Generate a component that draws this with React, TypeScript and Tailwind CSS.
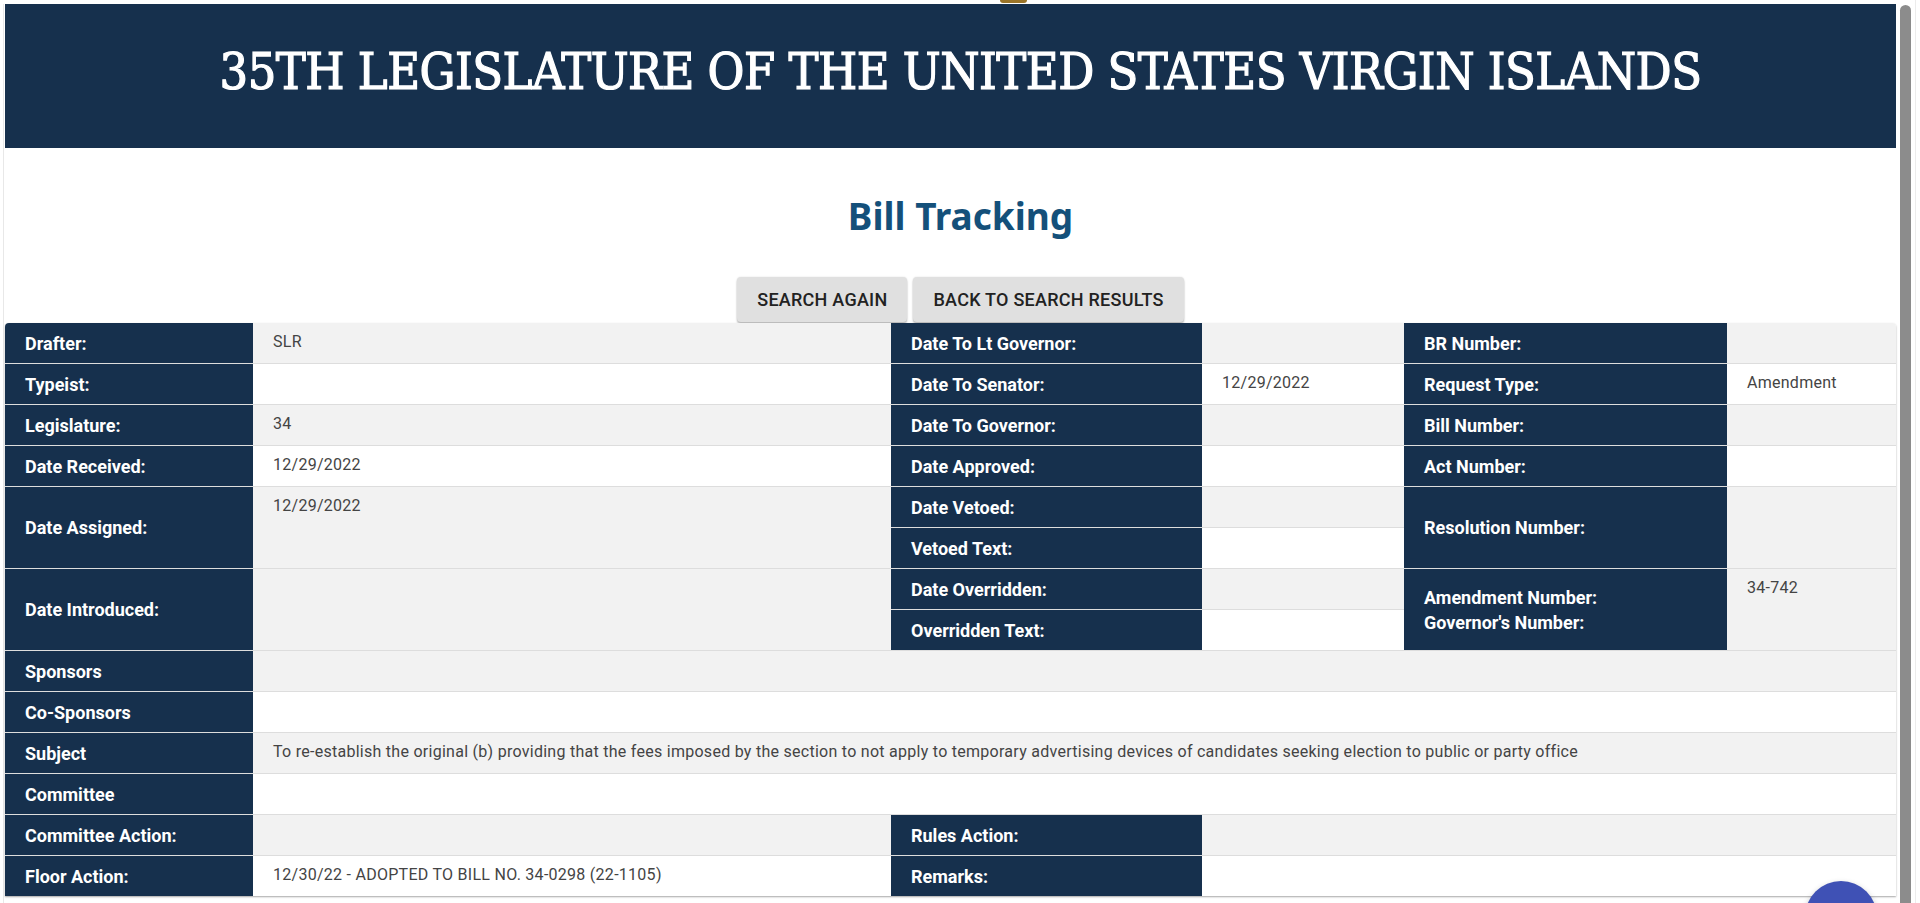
import React from "react";

type Cell = {
  text?: string;
  lines?: string[];
  label?: boolean;
  row: number;
  rowSpan?: 2;
  colSpan?: 3 | 5;
};

const rows: Cell[] = [
  { label: true, row: 1, text: "Drafter:" },
  { row: 1, text: "SLR" },
  { label: true, row: 1, text: "Date To Lt Governor:" },
  { row: 1 },
  { label: true, row: 1, text: "BR Number:" },
  { row: 1 },

  { label: true, row: 2, text: "Typeist:" },
  { row: 2 },
  { label: true, row: 2, text: "Date To Senator:" },
  { row: 2, text: "12/29/2022" },
  { label: true, row: 2, text: "Request Type:" },
  { row: 2, text: "Amendment" },

  { label: true, row: 3, text: "Legislature:" },
  { row: 3, text: "34" },
  { label: true, row: 3, text: "Date To Governor:" },
  { row: 3 },
  { label: true, row: 3, text: "Bill Number:" },
  { row: 3 },

  { label: true, row: 4, text: "Date Received:" },
  { row: 4, text: "12/29/2022" },
  { label: true, row: 4, text: "Date Approved:" },
  { row: 4 },
  { label: true, row: 4, text: "Act Number:" },
  { row: 4 },

  { label: true, row: 5, rowSpan: 2, text: "Date Assigned:" },
  { row: 5, rowSpan: 2, text: "12/29/2022" },
  { label: true, row: 5, text: "Date Vetoed:" },
  { row: 5 },
  { label: true, row: 5, rowSpan: 2, text: "Resolution Number:" },
  { row: 5, rowSpan: 2 },
  { label: true, row: 6, text: "Vetoed Text:" },
  { row: 6 },

  { label: true, row: 7, rowSpan: 2, text: "Date Introduced:" },
  { row: 7, rowSpan: 2 },
  { label: true, row: 7, text: "Date Overridden:" },
  { row: 7 },
  { label: true, row: 7, rowSpan: 2, lines: ["Amendment Number:", "Governor's Number:"] },
  { row: 7, rowSpan: 2, text: "34-742" },
  { label: true, row: 8, text: "Overridden Text:" },
  { row: 8 },

  { label: true, row: 9, text: "Sponsors" },
  { row: 9, colSpan: 5 },
  { label: true, row: 10, text: "Co-Sponsors" },
  { row: 10, colSpan: 5 },
  { label: true, row: 11, text: "Subject" },
  {
    row: 11,
    colSpan: 5,
    text: "To re-establish the original (b) providing that the fees imposed by the section to not apply to temporary advertising devices of candidates seeking election to public or party office",
  },
  { label: true, row: 12, text: "Committee" },
  { row: 12, colSpan: 5 },

  { label: true, row: 13, text: "Committee Action:" },
  { row: 13 },
  { label: true, row: 13, text: "Rules Action:" },
  { row: 13, colSpan: 3 },
  { label: true, row: 14, text: "Floor Action:" },
  { row: 14, text: "12/30/22 - ADOPTED TO BILL NO. 34-0298 (22-1105)" },
  { label: true, row: 14, text: "Remarks:" },
  { row: 14, colSpan: 3 },
];

function TrackingCell({ cell }: { cell: Cell }) {
  const border = cell.row > 1 ? "border-t border-[#dddddd]" : "";
  const span = [
    cell.rowSpan === 2 ? "row-span-2" : "",
    cell.colSpan === 5 ? "col-span-5" : cell.colSpan === 3 ? "col-span-3" : "",
  ].join(" ");

  if (cell.label) {
    return (
      <div
        className={`${border} ${span} bg-[#16304d] text-white font-bold text-[18px] leading-[25px] pl-5 pr-2 flex flex-col justify-center`}
      >
        {cell.lines ? cell.lines.map((l) => <div key={l}>{l}</div>) : cell.text}
      </div>
    );
  }

  const bg = cell.row % 2 === 1 ? "bg-[#f2f2f2]" : "bg-white";
  return (
    <div
      className={`${border} ${span} ${bg} text-[#444444] text-[16px] leading-[20px] tracking-[0.27px] pl-5 pr-2 pt-[9px] whitespace-nowrap`}
    >
      {cell.text}
    </div>
  );
}

export default function App() {
  return (
    <div className="relative h-[903px] w-[1920px] overflow-hidden bg-white font-['Roboto',sans-serif] flex">
      {/* page */}
      <div className="w-[1896px] pl-[3px] pt-[4px]">
        <div className="border-l border-[#e8e8e8] pl-[1px] h-full">
          <header className="h-[144px] bg-[#16304d] flex items-center justify-center pl-[20px] pb-[8px]">
            <h1 className="text-white text-[50px] leading-none tracking-[-0.5px] font-['DejaVu_Serif_Condensed','DejaVu_Serif',serif] font-stretch-condensed whitespace-nowrap [-webkit-text-stroke:1.2px_white]">
              35TH LEGISLATURE OF THE UNITED STATES VIRGIN ISLANDS
            </h1>
          </header>

          <h2 className="mt-[45px] pl-[20px] text-center text-[#14507a] text-[37px] leading-[45px] font-bold font-['Noto_Sans',sans-serif]">
            Bill Tracking
          </h2>

          <div className="mt-[39px] pl-[20px] flex justify-center gap-[6px]">
            <button className="h-[45px] px-5 rounded-[4px] bg-[#e0e0e0] text-[#222222] text-[18px] font-medium tracking-[0.25px] shadow-[0_2px_2px_rgba(0,0,0,0.24),0_0_2px_rgba(0,0,0,0.12)]">
              SEARCH AGAIN
            </button>
            <button className="h-[45px] px-5 rounded-[4px] bg-[#e0e0e0] text-[#222222] text-[18px] font-medium tracking-[0.25px] shadow-[0_2px_2px_rgba(0,0,0,0.24),0_0_2px_rgba(0,0,0,0.12)]">
              BACK TO SEARCH RESULTS
            </button>
          </div>

          <div className="mt-[1px] grid grid-cols-[248px_638px_311px_202px_323px_169px] grid-rows-[40px_repeat(13,41px)] rounded-t-[4px] overflow-hidden shadow-[0_1px_2px_rgba(0,0,0,0.35)]">
            {rows.map((cell, i) => (
              <TrackingCell key={i} cell={cell} />
            ))}
          </div>
        </div>
      </div>

      {/* scrollbar */}
      <div className="ml-[4px] w-[11px] pt-[5px]">
        <div className="h-full w-full rounded-t-full bg-[#8c8c8c]" />
      </div>
      <div className="w-[9px] flex justify-center">
        <div className="w-px h-full bg-[#ececec]" />
      </div>

      {/* logo peeking above header */}
      <div className="absolute left-[1000px] top-0 h-[3px] w-[27px] rounded-b-full bg-[#9a7428]" />

      {/* floating button */}
      <div className="absolute left-[1805px] top-[881px] h-[72px] w-[72px] rounded-full bg-[#3f51b5] shadow-[0_3px_6px_rgba(0,0,0,0.3)]" />
    </div>
  );
}
